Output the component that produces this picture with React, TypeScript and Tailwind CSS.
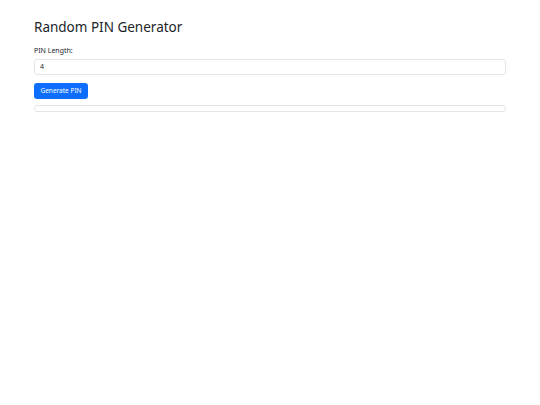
export default function App() {
  return (
    <main
      className="min-h-screen bg-white text-[#212529]"
      style={{ fontFamily: '"Noto Sans", "Liberation Sans", sans-serif' }}
    >
      <div className="px-[34px] pt-[19px]">
        <h1 className="text-[13.5px] leading-[1.2] font-normal mb-[11px]">Random PIN Generator</h1>
        <label className="block text-[7px] leading-[1.5] mb-[2px]">PIN Length:</label>
        <input
          type="number"
          defaultValue={4}
          className="block w-full h-[16px] rounded-[3px] border border-[#e3e6e9] px-[5px] text-[7px] outline-none"
        />
        <button
          type="button"
          className="mt-[7px] h-[16px] w-[54px] rounded-[3px] bg-[#0d6efd] text-[6.5px] text-white"
        >
          Generate PIN
        </button>
        <div className="mt-[6px] h-[7px] rounded-[3px] border border-[#e3e6e9]"></div>
      </div>
    </main>
  );
}
